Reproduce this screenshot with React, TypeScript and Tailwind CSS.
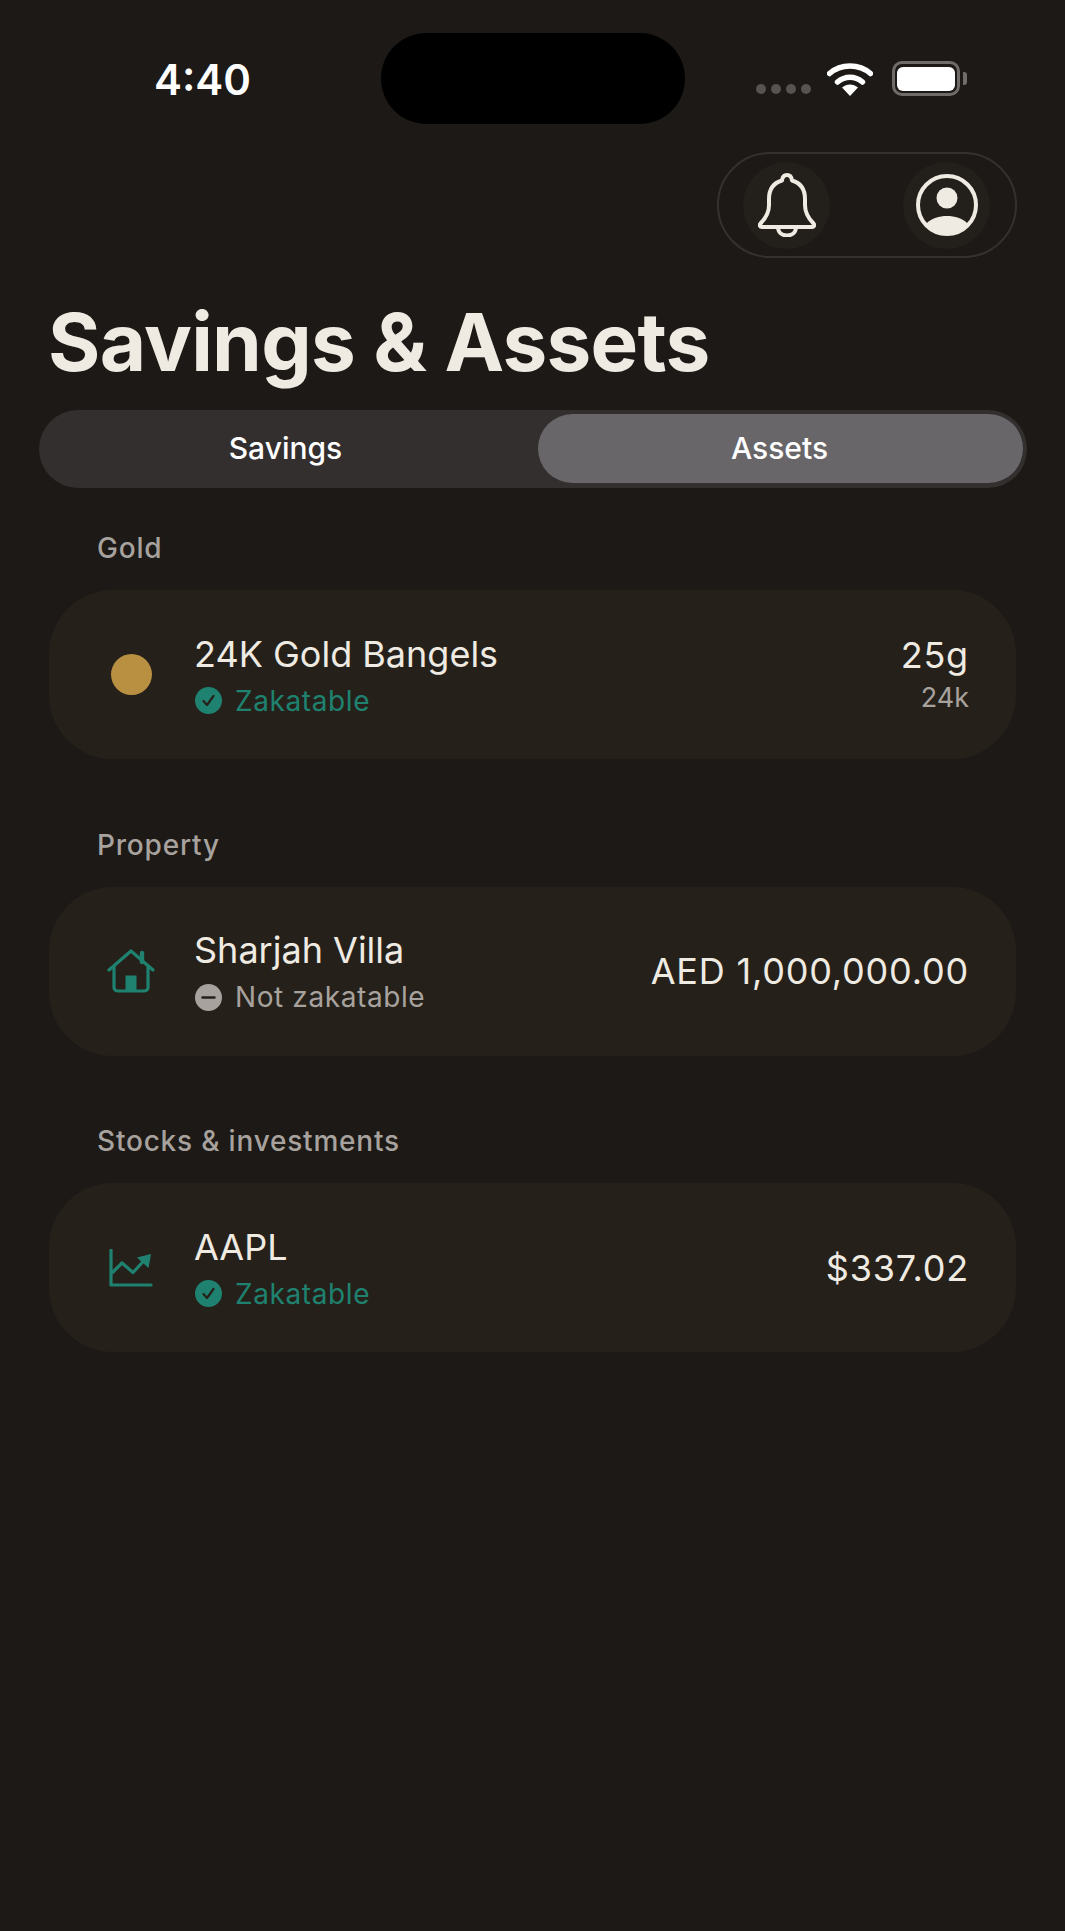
const Check = () => (
  <svg width="27" height="27" viewBox="0 0 27 27" className="ml-[1px] shrink-0">
    <circle cx="13.5" cy="13.5" r="13.5" fill="#1f8270" />
    <path d="M8.5 14l3.5 4 6.5-9" fill="none" stroke="#25211a" strokeWidth="2.2" strokeLinecap="round" strokeLinejoin="round" />
  </svg>
);

const Minus = () => (
  <svg width="27" height="27" viewBox="0 0 27 27" className="ml-[1px] shrink-0">
    <circle cx="13.5" cy="13.5" r="13.5" fill="#a8a29e" />
    <path d="M7.5 13.5h12" fill="none" stroke="#25211a" strokeWidth="2.4" strokeLinecap="round" />
  </svg>
);

const GoldDot = () => <div className="h-[41px] w-[41px] rounded-full bg-[#b98f42]" />;

const House = () => (
  <svg width="48" height="44" viewBox="0 0 48 44" fill="none">
    <path d="M2 21L24 2l11 9.5M35 11.5V6M35 11.5L46 21" stroke="#1f8270" strokeWidth="3.2" strokeLinecap="round" strokeLinejoin="round" />
    <path d="M7 17v21.5a3.5 3.5 0 0 0 3.5 3.5h27a3.5 3.5 0 0 0 3.5-3.5V17" stroke="#1f8270" strokeWidth="3.2" strokeLinecap="round" />
    <rect x="18.5" y="26.5" width="11" height="15" fill="#1f8270" />
    <path d="M35 4v9" stroke="#1f8270" strokeWidth="4.4" strokeLinecap="round" />
  </svg>
);

const Chart = () => (
  <svg width="44" height="38" viewBox="0 0 44 38" fill="none">
    <path d="M2 1v35h40" stroke="#1f8270" strokeWidth="3.2" strokeLinecap="round" strokeLinejoin="round" />
    <path d="M3 24l10-10 11 9.5 12-13" stroke="#1f8270" strokeWidth="3.2" strokeLinejoin="round" />
    <path d="M42 5L28 8.5 39.5 19z" fill="#1f8270" />
  </svg>
);

type RowProps = {
  label: string;
  icon: React.ReactNode;
  title: string;
  ok: boolean;
  value: string;
  sub?: string;
};

const Section = ({ label, icon, title, ok, value, sub }: RowProps) => (
  <section className="mb-[68.5px]">
    <h2 className="mb-[25px] ml-[97px] text-[28px] font-medium leading-[34px] tracking-[0.8px] text-[#a8a29e]">{label}</h2>
    <div className="mx-[49px] flex h-[169px] items-center rounded-[64px] bg-[#25211a] pr-[47px]">
      <div className="w-[145px] shrink-0 pl-[58px]">
        <div className="flex w-[48px] items-center justify-center">{icon}</div>
      </div>
      <div className="flex flex-col pt-[2px]">
        <div className="text-[36px] font-normal leading-[42px] text-[#efebe3]">{title}</div>
        <div className="mt-[8px] flex items-center gap-[13px]">
          {ok ? <Check /> : <Minus />}
          <span className={`text-[28px] leading-[36px] tracking-[0.6px] ${ok ? "text-[#1f8270]" : "text-[#a8a29e]"}`}>
            {ok ? "Zakatable" : "Not zakatable"}
          </span>
        </div>
      </div>
      <div className="ml-auto flex flex-col items-end">
        <div className="text-[36px] font-normal leading-[42px] tracking-[0.8px] text-[#efebe3]">{value}</div>
        {sub && <div className="mt-[5px] text-[27px] leading-[34px] text-[#a8a29e]">{sub}</div>}
      </div>
    </div>
  </section>
);

export default function App() {
  return (
    <div className="min-h-[1931px] w-[1065px] bg-[#1c1916] font-['Inter',sans-serif]">
      <div className="flex pl-[154px] pt-[33px]">
        <div className="w-[227px] pt-[21px] text-[42px] font-semibold leading-[52px] text-white">4:40</div>
        <div className="h-[91px] w-[304px] rounded-[46px] bg-black" />
        <div className="ml-[71px] flex items-start pt-[28px]">
          <div className="mt-[23px] flex w-[71px] gap-[5px]">
            <span className="h-[10px] w-[10px] rounded-full bg-[#565350]" />
            <span className="h-[10px] w-[10px] rounded-full bg-[#565350]" />
            <span className="h-[10px] w-[10px] rounded-full bg-[#565350]" />
            <span className="h-[10px] w-[10px] rounded-full bg-[#565350]" />
          </div>
          <svg width="46" height="34" viewBox="0 0 46 34" fill="none" className="mt-[1px]">
            <path d="M2.5 11.5C14 1.5 32 1.5 43.5 11.5" stroke="#fff" strokeWidth="5.5" strokeLinecap="round" />
            <path d="M10.5 20C18 13.5 28 13.5 35.5 20" stroke="#fff" strokeWidth="5.5" strokeLinecap="round" />
            <path d="M15 25.5c5-4 11-4 16 0L23 34z" fill="#fff" />
          </svg>
          <div className="ml-[19px] flex h-[35px] w-[68px] items-center justify-center rounded-[10px] border-[3px] border-[#6f6c69]">
            <div className="h-[24px] w-[58px] rounded-[6px] bg-white" />
          </div>
          <div className="ml-[3px] mt-[11px] h-[13px] w-[4px] rounded-r-[3px] bg-[#6f6c69]" />
        </div>
      </div>

      <div className="mt-[28px] flex justify-end pr-[48px]">
        <div className="flex h-[106px] w-[300px] items-center justify-between rounded-[53px] border-2 border-[#35322e] pl-[24px] pr-[25px]">
          <div className="flex h-[87px] w-[87px] items-center justify-center rounded-full bg-[#23201b]">
            <svg width="58" height="64" viewBox="0 0 58 64" fill="none" stroke="#efebe3" strokeWidth="4" strokeLinejoin="round">
              <path d="M29 2c-3 0-4.6 2-5 5.500C15.500 10 11 16.500 11 26v6c0 8-3 13-8.500 18.500-1.500 1.700-.5 3.500 1.500 3.500h50c2 0 3-1.800 1.500-3.500C50 45 47 40 47 32v-6c0-9.500-4.500-16-13-18.500C33.600 4 32 2 29 2z" />
              <path d="M20 54c0 5.500 4 8.500 9 8.500s9-3 9-8.500" />
            </svg>
          </div>
          <div className="flex h-[87px] w-[87px] items-center justify-center rounded-full bg-[#23201b]">
            <svg width="62" height="62" viewBox="0 0 62 62">
              <circle cx="31" cy="31" r="29" fill="none" stroke="#efebe3" strokeWidth="4" />
              <circle cx="31" cy="24" r="10.500" fill="#efebe3" />
              <path d="M10.500 49.500C16 44 23 42 31 42s15 2 20.500 7.500C46.500 56.500 39 60.500 31 60.500S15.500 56.500 10.500 49.500z" fill="#efebe3" />
            </svg>
          </div>
        </div>
      </div>

      <h1 className="ml-[48px] mt-[36px] text-[80px] font-bold leading-[96px] tracking-[-0.75px] text-[#efebe3]">Savings &amp; Assets</h1>

      <div className="ml-[39px] mr-[38px] mt-[20px] flex h-[78px] rounded-[39px] bg-[#342f2f] pb-[5px] pl-[4px] pr-[4px] pt-[4px]">
        <div className="flex flex-1 items-center justify-center pr-[10px] text-[30px] font-medium text-white">Savings</div>
        <div className="flex w-[485px] items-center justify-center rounded-[35px] bg-[#686669] pr-[2px] text-[30px] font-medium text-white">Assets</div>
      </div>

      <div className="mt-[43px]">
        <Section label="Gold" icon={<GoldDot />} title="24K Gold Bangels" ok value="25g" sub="24k" />
        <Section label="Property" icon={<House />} title="Sharjah Villa" ok={false} value="AED 1,000,000.00" />
        <Section label="Stocks &amp; investments" icon={<Chart />} title="AAPL" ok value="$337.02" />
      </div>
    </div>
  );
}
